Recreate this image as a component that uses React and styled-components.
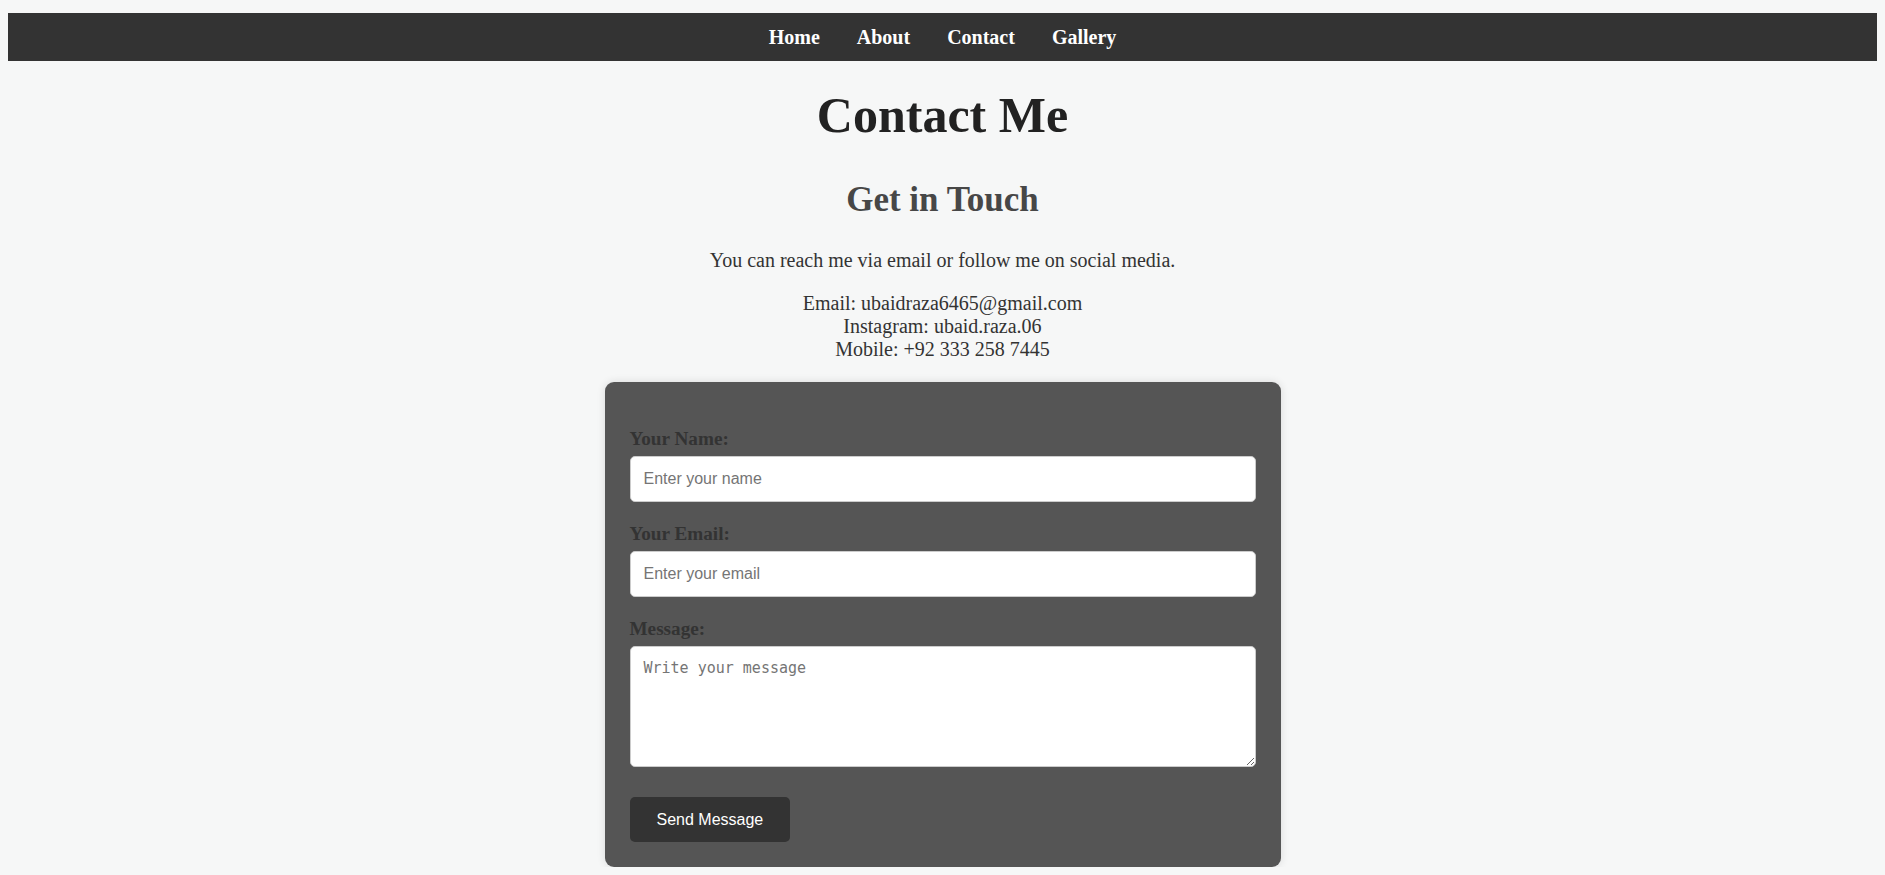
import React from 'react'
import styled, {createGlobalStyle} from 'styled-components'

const GlobalStyle = createGlobalStyle`
  body {
    margin: 8px;
    background-color: #f6f7f7;
    font-family: "Liberation Serif", "Times New Roman", serif;
    color: #333;
  }
`

const links = ['Home', 'About', 'Contact', 'Gallery']

const Nav = styled.nav`
  margin-top: 5px;
  height: 48px;
  background-color: #333;
  display: flex;
  justify-content: center;
  align-items: center;

  ul {
    list-style: none;
    margin: 0;
    padding: 0;
    display: flex;
    gap: 37px;
  }

  a {
    color: #fff;
    text-decoration: none;
    font-weight: bold;
    font-size: 20px;
  }
`

const Main = styled.main`
  display: flex;
  flex-direction: column;
  align-items: center;
  text-align: center;
`

const Title = styled.h1`
  margin: 25px 0 36px;
  font-size: 50px;
  color: #222;
`

const Subtitle = styled.h2`
  margin: 0 0 29px;
  font-size: 35px;
  color: #474747;
`

const Text = styled.p`
  margin: 0 0 20px;
  font-size: 20px;
  line-height: 23px;
  color: #333;
`

const Card = styled.form`
  box-sizing: border-box;
  width: 676px;
  margin-top: 1px;
  padding: 45px 25px 25px;
  background-color: #555;
  border-radius: 9px;
  box-shadow: 0 0 8px rgba(0, 0, 0, 0.12);
  text-align: left;
  display: flex;
  flex-direction: column;
`

const Field = styled.div`
  display: flex;
  flex-direction: column;
  gap: 6px;
  margin-bottom: ${p => p.$last ? '30px' : '20px'};
`

const Label = styled.label`
  font-size: 19.2px;
  font-weight: bold;
  line-height: 23px;
  color: #333;
`

const Input = styled.input`
  box-sizing: border-box;
  height: 46px;
  width: 100%;
  padding: 0 13px;
  border: 1px solid #ccc;
  border-radius: 5px;
  background: #fff;
  font-family: "Liberation Sans", Arial, sans-serif;
  font-size: 16px;

  &::placeholder {
    color: #757575;
  }
`

const TextArea = styled.textarea`
  box-sizing: border-box;
  height: 121px;
  width: 100%;
  padding: 12px 13px;
  border: 1px solid #ccc;
  border-radius: 5px;
  background: #fff;
  font-family: "DejaVu Sans Mono", monospace;
  font-size: 15px;

  &::placeholder {
    color: #757575;
  }
`

const Button = styled.button`
  align-self: flex-start;
  height: 45px;
  padding: 0 27px;
  border: none;
  border-radius: 5px;
  background-color: #333;
  color: #fff;
  font-family: "Liberation Sans", Arial, sans-serif;
  font-size: 16px;
  cursor: pointer;
`

export default function App() {
  return (
    <>
      <GlobalStyle />
      <Nav>
        <ul>
          {links.map(item => (
            <li key={item}><a href="#">{item}</a></li>
          ))}
        </ul>
      </Nav>
      <Main>
        <Title>Contact Me</Title>
        <Subtitle>Get in Touch</Subtitle>
        <Text>You can reach me via email or follow me on social media.</Text>
        <Text>
          Email: ubaidraza6465@gmail.com<br />
          Instagram: ubaid.raza.06<br />
          Mobile: +92 333 258 7445
        </Text>
        <Card onSubmit={e => e.preventDefault()}>
          <Field>
            <Label htmlFor="name">Your Name:</Label>
            <Input id="name" type="text" placeholder="Enter your name" />
          </Field>
          <Field>
            <Label htmlFor="email">Your Email:</Label>
            <Input id="email" type="email" placeholder="Enter your email" />
          </Field>
          <Field $last>
            <Label htmlFor="message">Message:</Label>
            <TextArea id="message" placeholder="Write your message" />
          </Field>
          <Button type="submit">Send Message</Button>
        </Card>
      </Main>
    </>
  )
}
